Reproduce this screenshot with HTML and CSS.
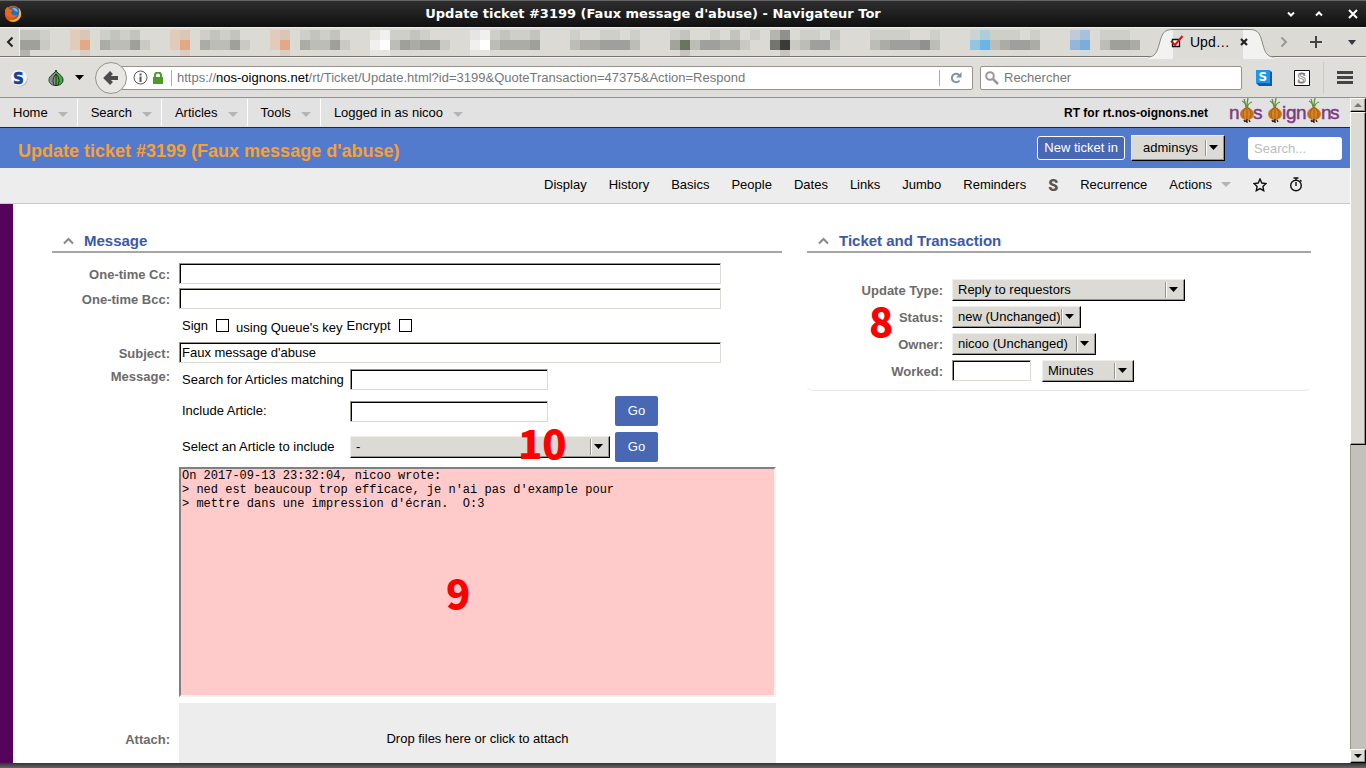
FILE: index.html
```html
<!DOCTYPE html>
<html lang="en">
<head>
  <meta charset="UTF-8">
  <meta name="viewport" content="width=device-width, initial-scale=1.0">
  <title>Update ticket #3199 (Faux message d'abuse)</title>
  <link rel="stylesheet" href="styles.css">
</head>
<body>
  <!-- Window title bar -->
  <header class="titlebar">
    <svg class="titlebar-logo" width="18" height="18" viewBox="0 0 18 18">
      <circle cx="9" cy="9" r="8.2" fill="#e4571b"/>
      <circle cx="9.5" cy="7.5" r="6" fill="#2a6fb5"/>
      <path d="M8 3c3-1 6 1 6 4l-3-1z" fill="#62b8e8"/>
      <path d="M1 5c1-2 2-3 3-3l1 2 4 1-2 2c0 3 3 4 6 3-1 3-5 4-8 2-3-1-4-4-4-7z" fill="#e8691c"/>
      <path d="M15 3c3 4 3 9-1 12-3 2-7 2-9 0 5 1 9-1 10-6z" fill="#f7b52b"/>
    </svg>
    <span class="titlebar-text">Update ticket #3199 (Faux message d'abuse) - Navigateur Tor</span>
    <div class="titlebar-buttons">
      <button aria-label="Minimize"><svg width="10" height="10" viewBox="0 0 10 10"><path d="M2 3.500l3 3 3-3"/></svg></button>
      <button aria-label="Maximize"><svg width="10" height="10" viewBox="0 0 10 10"><path d="M2 6.500l3-3 3 3"/></svg></button>
      <button aria-label="Close"><svg width="10" height="10" viewBox="0 0 10 10"><path d="M1 1l8 8M9 1l-8 8"/></svg></button>
    </div>
  </header>

  <!-- Tabs -->
  <div class="tabstrip">
    <button class="tab-scroll" aria-label="Previous tabs"><svg width="8" height="12" viewBox="0 0 8 12"><path d="M6.500 1.500L2 6l4.500 4.500" fill="none" stroke="#222" stroke-width="2"/></svg></button>
    <div class="tabs-hidden">
      <svg width="1136" height="26" viewBox="0 0 1136 26" fill="none" stroke-width="10" shape-rendering="crispEdges">
        <g stroke="#c4c4bf"><path d="M0 5h20M90 5h10M110 5h10M190 5h10M210 5h10M290 5h10M310 5h10M390 5h10M480 5h10M510 5h10M660 5h10M710 5h10M810 5h10"/></g>
        <g stroke="#cfcfca"><path d="M20 5h10M80 5h10M100 5h10M180 5h10M200 5h10M280 5h10M300 5h10M370 5h20M400 5h10M470 5h10M490 5h20M550 5h10M580 5h20M610 5h10M650 5h10M690 5h10M730 5h10M780 5h20M850 5h40M910 5h10M970 5h30M1010 5h10M1080 5h30"/></g>
        <g stroke="#e2cbbb"><path d="M50 5h10M150 5h10M250 5h10M50 15h10M150 15h10M250 15h10"/></g>
        <g stroke="#d9c6b6"><path d="M60 5h10M160 5h10M260 5h10"/></g>
        <g stroke="#e3a884"><path d="M60 15h10M160 15h10M260 15h10"/></g>
        <g stroke="#9f9f9b"><path d="M0 15h20M110 15h10M210 15h10M310 15h10M380 15h10M400 15h20M510 15h10M580 15h30M680 15h20M790 15h20M870 15h20M890 15h10M990 15h20M1090 15h20"/></g>
        <g stroke="#acaca7"><path d="M80 15h10M180 15h10M280 15h10M390 15h10M480 15h30M560 15h20M700 15h20M860 15h10M980 15h10M1010 15h10M1110 15h10"/></g>
        <g stroke="#bdbdb8"><path d="M90 15h20M190 15h20M290 15h20M370 15h10M470 15h10M550 15h10M610 15h10M670 15h10M780 15h10M850 15h10M910 15h10M970 15h10M1080 15h10"/></g>
        <g stroke="#cacac5"><path d="M20 15h10M120 15h10M220 15h10M320 15h10M420 15h10M720 15h10M770 15h10M810 15h10"/></g>
        <g stroke="#f0f0ee"><path d="M350 15h10M450 15h10M360 5h10M460 5h10"/></g>
        <g stroke="#e6e5e1"><path d="M350 5h10M450 5h10M350 25h20M450 25h20"/></g>
        <g stroke="#fff"><path d="M360 15h10M460 15h10"/></g>
        <g><path stroke="#a3a399" d="M650 15h10"/><path stroke="#6b7460" d="M660 15h10"/></g>
        <g><path stroke="#757570" d="M750 15h10"/><path stroke="#3b3b38" d="M760 15h10"/><path stroke="#b5b5b0" d="M750 5h10"/><path stroke="#90908c" d="M760 5h10M900 15h10"/></g>
        <g><path stroke="#94c5e0" d="M950 15h10"/><path stroke="#68b5e7" d="M960 15h10"/><path stroke="#cad4d5" d="M950 5h10"/><path stroke="#aecddb" d="M960 5h10"/></g>
        <g><path stroke="#92b7da" d="M1050 15h10"/><path stroke="#7aaddb" d="M1060 15h10"/><path stroke="#bfcbd8" d="M1050 5h10"/><path stroke="#a6c1da" d="M1060 5h10"/></g>
        <g><path stroke="#b4b4af" d="M0 25h10"/><path stroke="#ddccc2" d="M60 25h10M160 25h10M260 25h10"/><path stroke="#c8c4bf" d="M660 25h10M760 25h10"/><path stroke="#cfdcdc" d="M960 25h10M1060 25h10"/></g>
      </svg>
    </div>
    <div class="tab-active">
      <svg class="tab-shape" width="126" height="31" viewBox="0 0 126 31">
        <path d="M0 29C7 29 9 24 11 17 14 6 15 1.500 25 1.500h76c10 0 11 4.500 14 15.500 2 7 4 12 11 12v2H0z" fill="#f2f2f1"/>
        <path d="M25 2h70v29H25z" fill="#dddcd7"/>
        <path d="M0 29C7 29 9 24 11 17 14 6 15 1.500 25 1.500h76c10 0 11 4.500 14 15.500 2 7 4 12 11 12" fill="none" stroke="#8a8884"/>
      </svg>
      <svg class="tab-icon" width="14" height="14" viewBox="0 0 14 14">
        <path d="M2.500 4.500h7v7h-7z" fill="#fff" stroke="#111" stroke-width="1.300"/>
        <path d="M1 6l4 4L12.500 1" fill="none" stroke="#e00d0d" stroke-width="2"/>
      </svg>
      <span class="tab-title">Upd…</span>
      <button class="tab-close" aria-label="Close tab"><svg width="8" height="8" viewBox="0 0 8 8"><path d="M1 1l6 6M7 1L1 7" stroke="#222" stroke-width="2.200"/></svg></button>
    </div>
    <div class="tab-tools">
      <button aria-label="Next tabs"><svg width="8" height="12" viewBox="0 0 8 12"><path d="M1.500 1.500L6 6l-4.500 4.500" fill="none" stroke="#999" stroke-width="2"/></svg></button>
      <button aria-label="New tab"><svg width="12" height="12" viewBox="0 0 12 12"><path d="M6 0v12M0 6h12" stroke="#444" stroke-width="2"/></svg></button>
      <button aria-label="List all tabs"><svg width="8" height="5" viewBox="0 0 8 5"><path d="M0 0h8L4 5z" fill="#334"/></svg></button>
    </div>
  </div>

  <!-- Address bar -->
  <div class="toolbar">
    <button class="addon" aria-label="NoScript"><svg width="18" height="18" viewBox="0 0 18 18"><circle cx="10" cy="10" r="7.500" fill="#aaa"/><circle cx="9" cy="9" r="8" fill="#f4f6fa"/><text x="3" y="14.500" font-family="DejaVu Sans" font-weight="bold" font-size="15" fill="#17408f" stroke="#17408f" stroke-width=".6">S</text></svg></button>
    <button class="addon tor" aria-label="Torbutton"><svg width="16" height="16" viewBox="0 0 16 16"><path d="M8 0c0 3 7 5 7 10 0 4-4 5.500-7 5.500S1 14 1 10c0-5 7-7 7-10z" fill="#3fae3c" stroke="#222"/><path d="M8 3C4 6 1 7 1.500 11c.5 3 3.500 4 6.500 4z" fill="#8a8f88"/><path d="M8 4v11M8 4c-3 3-4 7-2 11M8 4c3 3 4 7 2 11" fill="none" stroke="#1e2a1c"/></svg><svg width="9" height="5" viewBox="0 0 9 5"><path d="M0 0h9L4.500 5z"/></svg></button>
    <button class="back" aria-label="Back"><svg width="16" height="14" viewBox="0 0 16 14"><path d="M8.500 1.500L3 7l5.500 5.500M3 7h12" fill="none" stroke="#4c4c4c" stroke-width="4"/></svg></button>
    <div class="urlbar">
      <svg width="15" height="15" viewBox="0 0 15 15"><circle cx="7.500" cy="7.500" r="6.500" fill="none" stroke="#555"/><path d="M7.500 6.500V12M7.500 3.500v2" stroke="#555" stroke-width="2"/></svg>
      <svg width="10" height="12" viewBox="0 0 10 12"><path d="M2 6V3.500a3 3 0 0 1 6 0V6" fill="none" stroke="#4b9b27" stroke-width="2"/><path d="M0 5h10v7H0z" fill="#4b9b27"/></svg>
      <div class="url" role="textbox" aria-label="Address">https://<b>nos-oignons.net</b>/rt/Ticket/Update.html?id=3199&amp;QuoteTransaction=47375&amp;Action=Respond</div>
      <button class="reload" aria-label="Reload"><svg width="12" height="12" viewBox="0 0 12 12"><path d="M9.500 8.500A4.200 4.200 0 1 1 9 3" fill="none" stroke="#8792a0" stroke-width="2"/><path d="M11.500 0v5.500H6z" fill="#8792a0"/></svg></button>
    </div>
    <div class="searchbar">
      <svg width="14" height="14" viewBox="0 0 14 14"><circle cx="5" cy="5" r="3.800" fill="none" stroke="#999" stroke-width="2"/><path d="M8 8l5 5" stroke="#999" stroke-width="2.500"/></svg>
      <input type="text" aria-label="Search the web" placeholder="Rechercher">
    </div>
    <div class="toolbar-right">
      <button aria-label="Stylish"><svg width="16" height="16" viewBox="0 0 16 16"><path d="M0 0h13l3 2v14H3l-3-3z" fill="#0f5c9e"/><path d="M0 0h14v13H0z" fill="#1a95f2"/><text x="2.500" y="11" font-family="DejaVu Sans" font-weight="bold" font-size="12" fill="#fff">S</text></svg></button>
      <button aria-label="Scripts"><svg width="16" height="16" viewBox="0 0 16 16"><path d="M.5.5h15v15H.5z" fill="#fff" stroke="#111"/><text x="3.500" y="13" font-family="Liberation Serif" font-weight="bold" font-size="15" fill="#fff" stroke="#777" stroke-width=".8">S</text></svg></button>
      <button class="burger" aria-label="Menu"><svg width="16" height="13" viewBox="0 0 16 13"><path d="M0 1.500h16M0 6.500h16M0 11.500h16" stroke="#444" stroke-width="3"/></svg></button>
    </div>
  </div>

  <div class="viewport">
    <main class="page">
      <!-- Main menu -->
      <nav class="mainmenu">
        <a class="has-sub" href="#">Home</a>
        <a class="has-sub" href="#">Search</a>
        <a class="has-sub" href="#">Articles</a>
        <a class="has-sub" href="#">Tools</a>
        <a class="has-sub" href="#">Logged in as nicoo</a>
        <span class="instance">RT for rt.nos-oignons.net</span>
        <svg class="logo" width="114" height="29" viewBox="0 0 114 29" aria-label="nos oignons">
          <defs>
            <g id="onion">
              <path d="M7 10C6 6 4 4 2 3M7 10c0-4 0-6 1-10M7 10c1-4 2-5 5-6M6 9C5 5 5 3 4 1" fill="none" stroke="#5a9438" stroke-width="1.300"/>
              <path d="M7 8c1 2 7 3 7 8 0 4-4 6-7 6s-7-2-7-6c0-5 6-6 7-8z" fill="#d98424"/>
              <path d="M7 9v13M7 9c-4 3-5 8-2 12M7 9c4 3 5 8 2 12M6 10c-5 3-5 6-3 10M8 10c5 3 5 6 3 10" fill="none" stroke="#99500f" stroke-width=".7"/>
              <path d="M4 22l1 2M7 21v4M9 22l1 2M6 22v2" stroke="#33261b" stroke-width="1.400"/>
            </g>
          </defs>
          <g class="logo-text">
            <text x="0" y="21">n</text>
            <text x="24" y="21">s</text>
            <text x="53" y="21">i</text>
            <text x="57" y="21">g</text>
            <text x="67" y="21">n</text>
            <text x="92" y="21">n</text>
            <text x="101" y="21">s</text>
          </g>
          <use href="#onion" x="11"/>
          <use href="#onion" x="39"/>
          <use href="#onion" x="78"/>
        </svg>
      </nav>

      <!-- Ticket title -->
      <div class="ticket-header">
        <h1>Update ticket #3199 (Faux message d'abuse)</h1>
        <button class="new-ticket">New ticket in</button>
        <select class="queue" aria-label="Queue"><option>adminsys</option></select>
        <input class="quick-search" type="text" aria-label="Search tickets" placeholder="Search...">
      </div>

      <!-- Ticket menu -->
      <nav class="pagemenu">
        <a href="#">Display</a>
        <a href="#">History</a>
        <a href="#">Basics</a>
        <a href="#">People</a>
        <a href="#">Dates</a>
        <a href="#">Links</a>
        <a href="#">Jumbo</a>
        <a href="#">Reminders</a>
        <a class="spam" href="#">S</a>
        <a href="#">Recurrence</a>
        <a class="has-sub" href="#">Actions</a>
        <a href="#" aria-label="Bookmark"><svg width="14" height="14" viewBox="0 0 14 14"><path d="M7 1l1.800 4 4.200.500-3.100 2.900.8 4.300L7 10.600l-3.700 2.100.8-4.300L1 5.500 5.200 5z" fill="none" stroke="#111" stroke-width="1.400"/></svg></a>
        <a href="#" aria-label="Timer"><svg width="14" height="15" viewBox="0 0 14 15"><circle cx="7" cy="8.500" r="5.300" fill="none" stroke="#111" stroke-width="1.400"/><path d="M4.500 1h5M7 1v2M7 5v4M11 3l1.500 1.500" stroke="#111" stroke-width="1.400"/></svg></a>
      </nav>

      <form class="content">
        <section class="panel">
          <h2><svg width="11" height="8" viewBox="0 0 11 8"><path d="M1 6.500l4.500-4.500L10 6.500"/></svg>Message</h2>
          <div class="fields">
            <div class="row"><label for="cc">One-time Cc:</label><input class="text wide" id="cc" type="text"></div>
            <div class="row"><label for="bcc">One-time Bcc:</label><input class="text wide" id="bcc" type="text"></div>
            <div class="row crypt">
              <div class="checks">
                <label for="sign">Sign</label><input id="sign" type="checkbox">
                <span>using Queue's key</span>
                <label for="encrypt">Encrypt</label><input id="encrypt" type="checkbox">
              </div>
            </div>
            <div class="row"><label for="subject">Subject:</label><input class="text wide" id="subject" type="text" value="Faux message d'abuse"></div>
            <div class="row message">
              <label for="body">Message:</label>
              <div>
                <div class="articles">
                  <label for="art-search">Search for Articles matching</label>
                  <input class="text" id="art-search" type="text">
                  <span></span>
                  <label for="art-include">Include Article:</label>
                  <input class="text" id="art-include" type="text">
                  <button class="go" type="button">Go</button>
                  <label for="art-select">Select an Article to include</label>
                  <select id="art-select"><option>-</option></select>
                  <button class="go" type="button">Go</button>
                </div>
                <textarea id="body">On 2017-09-13 23:32:04, nicoo wrote:
&gt; ned est beaucoup trop efficace, je n'ai pas d'example pour
&gt; mettre dans une impression d'écran.  O:3</textarea>
              </div>
            </div>
            <div class="row attach"><label for="drop">Attach:</label><button class="dropzone" id="drop" type="button">Drop files here or click to attach</button></div>
          </div>
          <strong class="mark mark-9">9</strong>
          <strong class="mark mark-10">10</strong>
        </section>

        <section class="panel info">
          <h2><svg width="11" height="8" viewBox="0 0 11 8"><path d="M1 6.500l4.500-4.500L10 6.500"/></svg>Ticket and Transaction</h2>
          <div class="fields">
            <div class="row"><label for="type">Update Type:</label><select class="type" id="type"><option>Reply to requestors</option></select></div>
            <div class="row"><label for="status">Status:</label><select class="status" id="status"><option>new (Unchanged)</option></select></div>
            <div class="row"><label for="owner">Owner:</label><select class="owner" id="owner"><option>nicoo (Unchanged)</option></select></div>
            <div class="row"><label for="worked">Worked:</label>
              <div class="worked"><input class="text" id="worked" type="text"><select class="units" aria-label="Units"><option>Minutes</option></select></div>
            </div>
          </div>
          <strong class="mark mark-8">8</strong>
        </section>
      </form>
    </main>

    <!-- Scrollbar -->
    <div class="scrollbar">
      <button aria-label="Scroll up"><svg width="8" height="4" viewBox="0 0 8 4"><path d="M0 4h8L4 0z" fill="#777"/></svg></button>
      <div class="thumb"></div>
      <div class="track"></div>
      <button aria-label="Scroll down"><svg width="8" height="4" viewBox="0 0 8 4"><path d="M0 0h8L4 4z"/></svg></button>
    </div>
  </div>

  <footer class="window-edge"></footer>
</body>
</html>
```

FILE: styles.css
```css
* {
  box-sizing: border-box;
}

body {
  margin: 0;
  height: 100vh;
  display: flex;
  flex-direction: column;
  overflow: hidden;
  font-family: "Liberation Sans", Arial, sans-serif;
  font-size: 13px;
  line-height: 16px;
  color: #000;
}

button,
input,
select,
textarea {
  font: inherit;
  color: inherit;
  margin: 0;
}

button {
  border: 0;
  padding: 0;
  background: none;
  display: flex;
  align-items: center;
  justify-content: center;
}

svg {
  display: block;
  flex: none;
}

/* Title bar */
.titlebar {
  height: 27px;
  flex: none;
  display: grid;
  grid-template-columns: 40px 1fr 100px;
  align-items: center;
  background: linear-gradient(#2e2e2e, #101010);
  border-top: 1px solid #666;
  color: #fff;
}

.titlebar-logo {
  margin-left: 4px;
}

.titlebar-text {
  font-family: "DejaVu Sans", sans-serif;
  font-size: 13px;
  font-weight: bold;
  text-align: center;
  white-space: nowrap;
}

.titlebar-buttons {
  display: flex;
  justify-content: flex-end;
  gap: 18px;
  padding-right: 8px;
}

.titlebar-buttons button:last-child {
  margin-left: 6px;
}

.titlebar-buttons path {
  stroke: #fff;
  stroke-width: 2;
  fill: none;
}

/* Tab strip */
.tabstrip {
  height: 30px;
  flex: none;
  display: flex;
  background: #dbdad5;
  border-top: 1px solid #efeeeb;
  border-bottom: 1px solid #77746e;
}

.tab-scroll {
  width: 20px;
  border-right: 1px solid #f0f0ee;
}

.tabs-hidden {
  flex: 1;
  min-width: 0;
  padding-top: 2px;
  overflow: hidden;
}

.tab-active {
  position: relative;
  width: 126px;
  display: flex;
  align-items: center;
  padding-left: 22px;
}

.tab-shape {
  position: absolute;
  left: 0;
  top: 0;
}

.tab-icon,
.tab-title,
.tab-close {
  position: relative;
}

.tab-title {
  width: 56px;
  padding-left: 6px;
  font-size: 14px;
}

.tab-tools {
  display: flex;
  align-items: center;
  gap: 22px;
  padding: 0 10px 0 6px;
}

.tab-tools button:last-child {
  margin-left: 4px;
}

/* Address toolbar */
.toolbar {
  height: 41px;
  flex: none;
  display: flex;
  align-items: center;
  background: #e0deda;
  border-top: 1px solid #f2f1ef;
  border-bottom: 1px solid #96938c;
  padding-left: 10px;
}

.tor {
  gap: 11px;
  margin: 0 11px 0 20px;
}

.back {
  width: 32px;
  height: 32px;
  border: 1px solid #96938c;
  border-radius: 50%;
  background: #e8e7e4;
  z-index: 1;
}

.urlbar,
.searchbar {
  height: 24px;
  display: flex;
  align-items: center;
  background: #fff;
  border: 1px solid #96938c;
  border-radius: 2px;
}

.urlbar {
  flex: 1;
  margin-left: -8px;
  padding-left: 13px;
  gap: 5px;
}

.url {
  flex: 1;
  border-left: 1px solid #aaa;
  margin-left: 3px;
  padding-left: 5px;
  color: #777;
  white-space: nowrap;
}

.url b {
  font-weight: normal;
  color: #000;
}

.reload {
  width: 33px;
  height: 16px;
  border-left: 1px solid #aaa;
}

.searchbar {
  width: 262px;
  margin-left: 7px;
  padding-left: 4px;
  gap: 5px;
}

.searchbar input {
  border: 0;
  padding: 0;
  width: 100%;
  background: none;
}

.searchbar input::placeholder {
  color: #777;
}

.toolbar-right {
  display: flex;
  align-items: center;
  gap: 22px;
  padding: 0 13px 0 14px;
}

.burger {
  height: 32px;
  margin-left: -9px;
  padding-left: 13px;
  border-left: 1px solid #ccc9c4;
}

/* Viewport */
.viewport {
  flex: 1;
  min-height: 0;
  display: flex;
  background: #fff;
}

.page {
  flex: 1;
  min-width: 0;
  display: flex;
  flex-direction: column;
  overflow: hidden;
}

a {
  color: inherit;
  text-decoration: none;
}

.has-sub {
  display: flex;
  align-items: center;
}

.has-sub::after {
  content: "";
  margin: 4px 0 0 10px;
  border: 5px solid transparent;
  border-top-color: #b4b4b4;
  border-bottom: 0;
}

/* Main menu */
.mainmenu {
  height: 30px;
  flex: none;
  display: flex;
  align-items: stretch;
  background: #e2e2e2;
  border-bottom: 1px solid #54045a;
}

.mainmenu a {
  padding: 0 9px 0 13px;
  border-right: 1px solid #fff;
  margin: 1px 0;
}

.mainmenu a:nth-of-type(5) {
  border-right: 0;
}

.instance {
  margin: 7px 21px 0 auto;
  font-size: 12px;
  font-weight: bold;
}

.logo {
  margin-right: 7px;
}

.logo-text {
  font-family: "Liberation Sans", sans-serif;
  font-size: 19px;
  fill: #7e3a86;
  stroke: #7e3a86;
  stroke-width: 0.5px;
}

/* Ticket title */
.ticket-header {
  height: 40px;
  flex: none;
  display: flex;
  align-items: center;
  padding: 0 8px 0 18px;
  background: #527bcd;
}

h1 {
  margin: 6px auto 0 0;
  font-size: 18px;
  line-height: 22px;
  color: #f9a033;
}

.new-ticket {
  height: 24px;
  padding: 0 6px;
  border: 1px solid #fff;
  border-radius: 3px;
  background: #4868b3;
  color: #fff;
}

.quick-search {
  width: 94px;
  height: 23px;
  margin-left: 23px;
  padding: 0 6px;
  border: 0;
  border-radius: 3px;
  background: #fff;
}

.quick-search::placeholder {
  color: #bbb;
}

/* Ticket menu */
.pagemenu {
  height: 36px;
  flex: none;
  display: flex;
  align-items: center;
  justify-content: flex-end;
  gap: 22px;
  padding: 0 47px 2px 0;
  background: #ededed;
  border-bottom: 1px solid #c8c8c8;
}

.pagemenu .has-sub::after {
  margin: 0 0 0 9px;
}

.spam {
  padding-top: 2px;
  font-family: Roboto, sans-serif;
  font-weight: 900;
  font-size: 16px;
  color: #555;
}

/* Controls */
select {
  height: 22px;
  padding: 0 20px 0 5px;
  appearance: none;
  border: 1px solid #efeeea;
  border-right-color: #000;
  border-bottom-color: #000;
  border-radius: 0;
  box-shadow: inset -1px -1px #96938c;
  background: #dbdad5 url("data:image/svg+xml,%3Csvg xmlns='http://www.w3.org/2000/svg' width='18' height='16'%3E%3Cpath d='M.5 0v16' stroke='%2396938c'/%3E%3Cpath d='M1.5 0v16' stroke='%23fff'/%3E%3Cpath d='M4 5h9L8.500 10z'/%3E%3C/svg%3E") no-repeat right 1px center;
}

select.queue {
  width: 94px;
  height: 26px;
  margin-left: 6px;
  padding-left: 11px;
}

.text {
  height: 21px;
  padding: 0 2px;
  background: #fff;
  border: 1px solid #96938c;
  border-right-color: #dbdad5;
  border-bottom-color: #dbdad5;
  box-shadow: inset 1px 1px #000;
}

/* Content */
.content {
  flex: 1;
  min-height: 0;
  display: grid;
  grid-template-columns: 730fr 504fr;
  align-items: start;
  gap: 25px;
  padding: 28px 39px 0;
  border-left: 13px solid #54045a;
}

.panel {
  position: relative;
}

h2 {
  margin: 0;
  height: 21px;
  display: flex;
  align-items: center;
  gap: 10px;
  padding: 0 0 2px 11px;
  border-bottom: 2px solid #a6a6a6;
  font-size: 15px;
  color: #3c59a6;
}

h2 path {
  fill: none;
  stroke: #888;
  stroke-width: 2;
}

.fields {
  display: flex;
  flex-direction: column;
  gap: 4px;
  padding-top: 10px;
}

.row {
  display: grid;
  grid-template-columns: 118px 1fr;
  column-gap: 9px;
  align-items: center;
  justify-items: start;
}

.row > label {
  justify-self: end;
  padding-top: 2px;
  font-weight: bold;
  color: #6b6b6b;
}

.wide {
  width: 542px;
  max-width: 100%;
}

.crypt {
  height: 25px;
}

.checks {
  grid-column: 2;
  display: flex;
  align-items: center;
  gap: 4px;
  padding-left: 3px;
}

.checks span {
  padding-top: 4px;
}

input[type="checkbox"] {
  appearance: none;
  width: 13px;
  height: 13px;
  margin: 0 3px 0 4px;
  border: 1px solid #000;
  background: #fff;
}

.message {
  align-items: start;
}

.articles {
  display: grid;
  grid-template-columns: 165px 260px 45px;
  align-items: center;
  column-gap: 3px;
  row-gap: 6px;
  padding: 2px 0 5px 3px;
}

.articles .text {
  width: 198px;
}

.articles label {
  white-space: nowrap;
}

.go {
  height: 30px;
  margin-left: 2px;
  background: #4868b3;
  border-radius: 2px;
  color: #fff;
}

textarea {
  display: block;
  width: 597px;
  height: 230px;
  padding: 0 1px;
  resize: none;
  background: #ffcaca;
  border: 2px solid #808080;
  border-right-color: #f2f2f2;
  border-bottom-color: #f2f2f2;
  font-family: "Liberation Mono", "Courier New", monospace;
  font-size: 12px;
  line-height: 14px;
}

.attach {
  margin-top: 2px;
}

.dropzone {
  width: 597px;
  height: 72px;
  background: #ededed;
}

/* Ticket and Transaction */
.info {
  padding-bottom: 8px;
  border-bottom: 1px solid #e8e8e8;
  border-radius: 0 0 6px 6px;
}

.info .fields {
  gap: 5px;
  padding-top: 26px;
}

.info .row {
  grid-template-columns: 136px 1fr;
}

.type {
  width: 233px;
}

.status {
  width: 129px;
}

.owner {
  width: 144px;
}

.worked {
  display: flex;
  gap: 11px;
}

.worked .text {
  width: 79px;
}

.units {
  width: 92px;
}

/* Numbered callouts */
.mark {
  position: absolute;
  font-family: "Noto Sans CJK JP", "Noto Sans", sans-serif;
  font-size: 40px;
  font-weight: 900;
  line-height: 40px;
  color: #f00;
}

.mark-8 {
  left: 62px;
  top: 68px;
}

.mark-9 {
  left: 394px;
  top: 340px;
}

.mark-10 {
  left: 466px;
  top: 190px;
}

/* Scrollbar */
.scrollbar {
  width: 16px;
  flex: none;
  display: flex;
  flex-direction: column;
  background: #c3c1bb;
}

.scrollbar button,
.thumb {
  background: #dbdad5;
  border: 1px solid #fff;
  border-right-color: #000;
  border-bottom-color: #000;
  box-shadow: inset -1px -1px #96938c;
}

.scrollbar button {
  height: 14px;
}

.thumb {
  flex: 332;
}

.track {
  flex: 305;
  border-left: 1px solid #96938c;
}

/* Bottom window edge */
.window-edge {
  height: 5px;
  flex: none;
  background: linear-gradient(#333, #666);
}
```
